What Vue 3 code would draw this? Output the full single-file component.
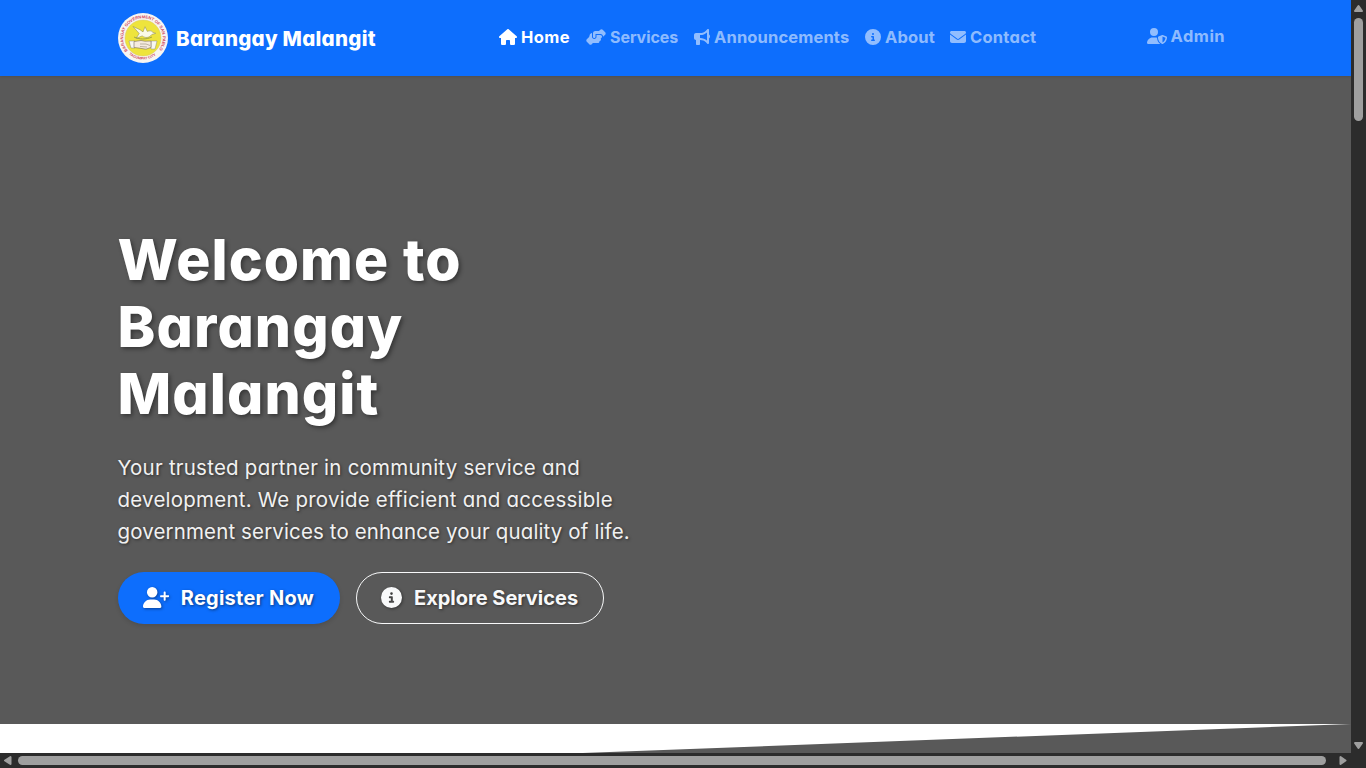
<script setup>
const infoPath = 'M256 512A256 256 0 1 0 256 0a256 256 0 1 0 0 512zM216 336h24V272H216c-13.3 0-24-10.7-24-24s10.7-24 24-24h48c13.3 0 24 10.7 24 24v88h8c13.3 0 24 10.7 24 24s-10.7 24-24 24H216c-13.3 0-24-10.7-24-24s10.7-24 24-24zm40-208a32 32 0 1 1 0 64 32 32 0 1 1 0-64z'

const links = [
  { label: 'Home', cls: 'home', w: 576, path: 'M575.8 255.5c0 18-15 32.1-32 32.1h-32l.7 160.2c0 2.7-.2 5.4-.5 8.1V472c0 22.1-17.9 40-40 40H456c-1.1 0-2.2 0-3.3-.1c-1.4 .1-2.8 .1-4.2 .1H416 392c-22.1 0-40-17.9-40-40V448 384c0-17.7-14.3-32-32-32H256c-17.7 0-32 14.3-32 32v64 24c0 22.1-17.9 40-40 40H160 128.1c-1.5 0-3-.1-4.5-.2c-1.2 .1-2.4 .2-3.6 .2H104c-22.1 0-40-17.9-40-40V360c0-.9 0-1.9 .1-2.8V287.6H32c-18 0-32-14-32-32.1c0-9 3-17 10-24L266.4 8c7-7 15-8 22-8s15 2 21 7L564.8 231.5c8 7 12 15 11 24z' },
  { label: 'Services', cls: 'services', w: 640, path: 'M544 248v3.3l69.7-69.7c21.9-21.9 21.9-57.3 0-79.2L535.6 24.4c-21.9-21.9-57.3-21.9-79.2 0L416.3 64.5c-2.7-.3-5.5-.5-8.3-.5H296c-37.1 0-67.6 28-71.6 64H224V248c0 22.1 17.9 40 40 40s40-17.9 40-40V176c0 0 0-.1 0-.1V160l16 0 136 0c0 0 0 0 .1 0H464c44.2 0 80 35.8 80 80v8zM336 192v56c0 39.8-32.2 72-72 72s-72-32.2-72-72V129.4c-35.9 6.2-65.8 32.3-76 68.2L99.5 255.2 26.3 328.4c-21.9 21.9-21.9 57.3 0 79.2l78.1 78.1c21.9 21.9 57.3 21.9 79.2 0l37.7-37.7c.9 0 1.8 .1 2.7 .1H384c26.5 0 48-21.5 48-48c0-5.6-1-11-2.7-16H432c26.5 0 48-21.5 48-48c0-12.8-5-24.4-13.2-33c25.7-5 45.1-27.6 45.2-54.8v-.4c-.1-30.8-25.1-55.8-56-55.8c0 0 0 0 0 0l-120 0z' },
  { label: 'Announcements', cls: 'announcements', w: 512, path: 'M480 32c0-12.9-7.8-24.6-19.8-29.6s-25.7-2.2-34.9 6.9L381.7 53c-48 48-113.1 75-181 75H192 160 64c-35.3 0-64 28.7-64 64v96c0 35.3 28.7 64 64 64l0 128c0 17.7 14.3 32 32 32h64c17.7 0 32-14.3 32-32V352l8.7 0c67.9 0 133 27 181 75l43.6 43.6c9.2 9.2 22.9 11.9 34.9 6.9s19.8-16.6 19.8-29.6V300.4c18.6-8.8 32-32.5 32-60.4s-13.4-51.6-32-60.4V32zm-64 76.7V240 371.3C357.2 317.8 280.5 288 200.7 288H192V192h8.7c79.8 0 156.5-29.8 215.3-83.3z' },
  { label: 'About', cls: 'about', w: 512, path: infoPath },
  { label: 'Contact', cls: 'contact', w: 512, path: 'M48 64C21.5 64 0 85.5 0 112c0 15.1 7.1 29.3 19.2 38.4L236.8 313.6c11.4 8.5 27 8.5 38.4 0L492.8 150.4c12.1-9.1 19.2-23.3 19.2-38.4c0-26.5-21.5-48-48-48H48zM0 176V384c0 35.3 28.7 64 64 64H448c35.3 0 64-28.7 64-64V176L294.4 339.2c-22.8 17.1-54 17.1-76.8 0L0 176z' },
]
</script>

<template>
  <div class="window">
    <div class="page">
      <nav class="navbar">
        <a class="brand">
          <svg class="seal" viewBox="0 0 50 50">
            <defs>
              <path id="seal-top" d="M9.7 37.6A19.8 19.8 0 1 1 40.3 37.6" />
              <path id="seal-bottom" d="M11 41.3A21.5 21.5 0 0 0 39 41.3" />
            </defs>
            <circle cx="25" cy="25" r="25" fill="#f7f5f2" />
            <circle cx="25" cy="25" r="18" fill="#eee43c" stroke="#d8c96a" stroke-width=".5" />
            <text class="seal-text"><textPath href="#seal-top">BARANGAY GOVERNMENT OF SAN PABLO</textPath></text>
            <text class="seal-text small"><textPath href="#seal-bottom">TAGUMPAY CITY</textPath></text>
            <path d="M15 13.5l7 3.2 3 2.2 2-5.2 2.3 4.7c2.3-1 4.4-.7 5.5.9l3 1-4 1.2c-3 3.8-6.6 3.6-9.6 1.4l-6 2.4 3-4.8z" fill="#fbfae9" stroke="#97955e" stroke-width=".6" />
            <path d="M16 24c5 2.5 12 2.8 18 0" fill="none" stroke="#8b9445" stroke-width=".8" />
            <path d="M11 28h6v7h-4zM33 28h6l-2 8h-4z" fill="#f8f8f2" stroke="#777" stroke-width=".4" />
            <path d="M16 28.5l7-1 4 .7 6-.2v6.4l-5 1.8-7-1.1-5-.6z" fill="#f5ebdf" stroke="#776957" stroke-width=".6" />
            <path d="M22 31h6l4 1.5M22 33.5l7 .5" fill="none" stroke="#827463" stroke-width=".5" />
          </svg>
          <span class="brand-name">Barangay Malangit</span>
        </a>
        <div class="links">
          <a v-for="link in links" :key="link.label" class="link" :class="link.cls">
            <svg class="icon" :viewBox="`0 0 ${link.w} 512`"><path :d="link.path" /></svg>
            <span>{{ link.label }}</span>
          </a>
        </div>
        <a class="link admin">
          <svg class="icon" viewBox="0 0 640 512"><path d="M224 256A128 128 0 1 0 224 0a128 128 0 1 0 0 256zm-45.7 48C79.8 304 0 383.8 0 482.3C0 498.7 13.3 512 29.7 512H418.3c1.8 0 3.5-.2 5.3-.5c-76.3-55.1-99.8-141-103.1-200.2c-16.1-4.8-33.1-7.3-50.7-7.3H178.3zm308.8-78.3l-120 48C358 277.4 352 286.2 352 296c0 63.3 25.9 168.8 134.8 214.2c5.9 2.5 12.6 2.5 18.5 0C614.1 464.8 640 359.3 640 296c0-9.8-6-18.6-15.1-22.3l-120-48c-5.7-2.3-12.1-2.3-17.8 0zM591.4 312c-3.9 50.7-27.2 116.7-95.4 149.7V273.8L591.4 312z" /></svg>
          <span>Admin</span>
        </a>
      </nav>
      <main class="hero">
        <h1><span>Welcome to</span><span>Barangay</span><span>Malangit</span></h1>
        <p><span>Your trusted partner in community service and</span><span>development. We provide efficient and accessible</span><span class="last">government services to enhance your quality of life.</span></p>
        <div class="actions">
          <a class="btn primary">
            <svg class="btn-icon" viewBox="0 0 640 512"><path d="M96 128a128 128 0 1 1 256 0A128 128 0 1 1 96 128zM0 482.3C0 383.8 79.8 304 178.3 304h91.4C368.2 304 448 383.8 448 482.3c0 16.4-13.3 29.7-29.7 29.7H29.7C13.3 512 0 498.7 0 482.3zM504 312V248H440c-13.3 0-24-10.7-24-24s10.7-24 24-24h64V136c0-13.3 10.7-24 24-24s24 10.7 24 24v64h64c13.3 0 24 10.7 24 24s-10.7 24-24 24H552v64c0 13.3-10.7 24-24 24s-24-10.7-24-24z" /></svg>
            <span>Register Now</span>
          </a>
          <a class="btn outline">
            <svg class="btn-icon" viewBox="0 0 512 512"><path :d="infoPath" /></svg>
            <span>Explore Services</span>
          </a>
        </div>
      </main>
      <div class="slope"></div>
    </div>
    <div class="vbar">
      <svg class="arrow" viewBox="0 0 15 18"><path d="M7.5 6l3.5 5h-7z" /></svg>
      <div class="vthumb"></div>
      <svg class="arrow end" viewBox="0 0 15 15"><path d="M4 5h7l-3.5 5z" /></svg>
    </div>
    <div class="hbar">
      <svg class="harrow" viewBox="0 0 18 15"><path d="M5 7.5l5.5-3.5v7z" /></svg>
      <div class="hthumb"></div>
      <svg class="harrow hend" viewBox="0 0 18 15"><path d="M6.500 4v7l5-3.5z" /></svg>
    </div>
    <div class="corner"></div>
  </div>
</template>

<style>
html, body { margin: 0; overflow: hidden; background: #2c2c2c; }
</style>

<style scoped>
.window {
  width: 1366px; height: 768px; display: grid;
  grid-template: 753px 15px / 1351px 15px;
  font-family: Inter, "Open Sans", sans-serif;
  font-feature-settings: "cv11" 1, "ss03" 1;
  color: #fff; white-space: nowrap; overflow: hidden;
}
.page { background: #595959; display: flex; flex-direction: column; overflow: hidden; }
.navbar {
  flex: none; height: 76px; box-sizing: border-box; padding: 0 117.5px;
  background: #0d6efd; display: flex; align-items: center;
  box-shadow: 0 1px 3px rgba(0, 0, 0, .12);
}
.brand { display: flex; align-items: center; gap: 8.5px; width: 381.5px; }
.seal { width: 50px; height: 50px; flex: none; }
.seal-text { font: 700 4.2px "Liberation Sans", sans-serif; fill: #d0485c; }
.small { font-size: 3.6px; }
.brand-name { font-size: 20.5px; font-weight: 800; letter-spacing: .27px; }
.links { display: flex; gap: 16px; }
.link { display: flex; align-items: center; gap: 4px; font-size: 16.5px; font-weight: 700; line-height: 24px; color: rgba(255, 255, 255, .55); box-sizing: border-box; padding-bottom: 2px; letter-spacing: .15px; }
.icon { height: 16px; flex: none; fill: currentColor; }
.home { color: #fff; width: 71px; letter-spacing: .4px; }
.services { width: 92px; font-size: 16px; letter-spacing: -.05px; }
.announcements { width: 155px; }
.about { width: 69px; }
.contact { width: 87px; letter-spacing: .25px; }
.admin { margin-left: auto; width: 87px; padding-bottom: 4px; letter-spacing: .5px; }
.hero { flex: none; height: 648px; box-sizing: border-box; padding: 150px 117.5px 0; text-shadow: 1px 1px 3px rgba(0, 0, 0, .5); }
h1 { margin: 0 0 24px; font-size: 57px; font-weight: 800; line-height: 67.2px; letter-spacing: 1.1px; text-shadow: 2px 2px 4px rgba(0, 0, 0, .4); }
h1 span, p span { display: block; }
p { margin: 0 0 24px; font-size: 20.5px; line-height: 32px; color: #f1f1f1; letter-spacing: .23px; }
.last { letter-spacing: .13px; }
.actions { display: flex; gap: 16px; }
.btn { height: 52px; box-sizing: border-box; border-radius: 26px; padding: 0 25px; display: flex; align-items: center; gap: 12px; font-size: 20px; font-weight: 700; }
.primary { width: 222.5px; background: #0d6efd; box-shadow: 0 2px 4px rgba(0, 0, 0, .12); letter-spacing: .25px; }
.outline { width: 248px; padding: 0 24px; border: 1px solid #f8f9fa; color: #f8f9fa; }
.btn-icon { height: 21px; flex: none; fill: currentColor; filter: drop-shadow(1px 1px 1.5px rgba(0, 0, 0, .4)); }
.slope { flex: none; height: 51px; background: #fff; clip-path: polygon(0 0, 100% 0, 0 100%); }
.vbar { background: #2c2c2c; display: flex; flex-direction: column; align-items: center; }
.arrow { width: 15px; height: 18px; fill: #9f9f9f; stroke: #9f9f9f; stroke-width: 2; stroke-linejoin: round; flex: none; }
.end { height: 15px; margin-top: auto; }
.vthumb { width: 9px; height: 103px; border-radius: 5px; background: #9f9f9f; }
.hbar { background: #2c2c2c; display: flex; align-items: center; }
.harrow { width: 18px; height: 15px; fill: #9f9f9f; stroke: #9f9f9f; stroke-width: 2; stroke-linejoin: round; flex: none; }
.hthumb { flex: none; width: 1308px; height: 9px; border-radius: 5px; background: #9f9f9f; }
.hend { margin-left: 8px; }
.corner { background: #2c2c2c; }
</style>
